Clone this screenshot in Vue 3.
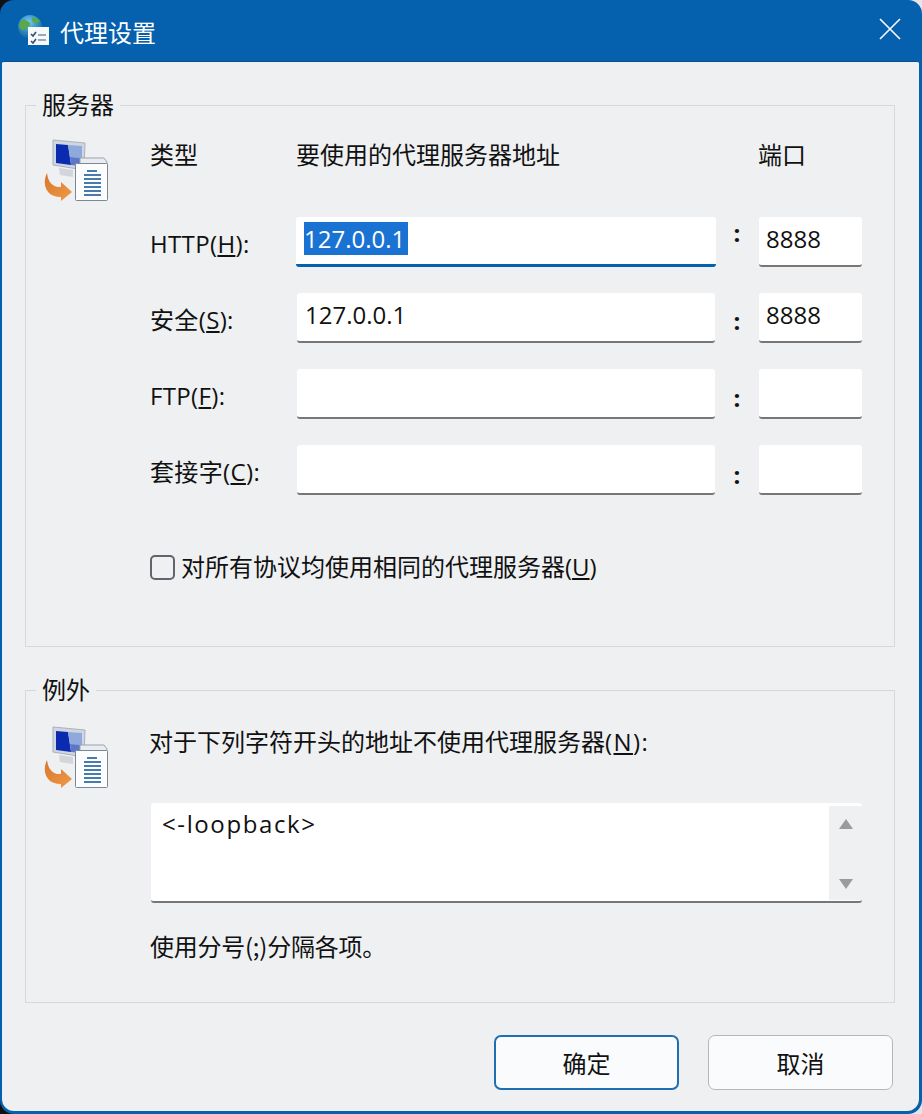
<script setup>
const rows = [
  { pre: 'HTTP(', key: 'H', post: '):', addr: '127.0.0.1', port: '8888', focus: true, colon: 'up' },
  { pre: '安全(', key: 'S', post: '):', addr: '127.0.0.1', port: '8888', focus: false, colon: 'mid' },
  { pre: 'FTP(', key: 'F', post: '):', addr: '', port: '', focus: false, colon: 'low' },
  { pre: '套接字(', key: 'C', post: '):', addr: '', port: '', focus: false, colon: 'low2' }
]
const lines = [174, 178, 182, 186, 190, 194]
</script>

<template>
  <div class="window">
    <header class="titlebar">
      <svg class="title-icon" width="34" height="34" viewBox="0 0 34 34">
        <defs>
          <radialGradient id="globe" cx="45%" cy="30%" r="70%">
            <stop offset="0" stop-color="#7cc8ef" />
            <stop offset="0.55" stop-color="#2f8fc9" />
            <stop offset="1" stop-color="#155f96" />
          </radialGradient>
          <linearGradient id="orange" x1="0" y1="0" x2="1" y2="1">
            <stop offset="0" stop-color="#d9762a" />
            <stop offset="1" stop-color="#f09a4a" />
          </linearGradient>
        </defs>
        <circle cx="12" cy="12" r="12" fill="url(#globe)" />
        <path d="M3 6c4-3 6 0 8 1s1 4-1 5-3 4-6 3S0 9 3 6zM14 3c3-1 6 0 8 3l-4 3c-2-1-5-3-4-6z" fill="#5aa84a" />
        <rect x="10" y="12" width="21" height="18" fill="#f6f8fa" />
        <path d="M13 19l2 2 3-4M13 26l2 2 3-4" fill="none" stroke="#35506e" stroke-width="1.6" />
        <path d="M20 20h8M20 25h8" stroke="#7a8ea4" stroke-width="1.6" />
      </svg>
      <span class="title-text">代理设置</span>
      <svg class="close" width="22" height="22" viewBox="0 0 22 22">
        <path d="M1 1l20 20M21 1L1 21" stroke="#fff" stroke-width="1.6" fill="none" />
      </svg>
    </header>

    <main class="client">
      <section class="group group-server">
        <span class="legend">服务器</span>
        <div class="grid">
          <div class="icon-cell">
            <svg width="66" height="66" viewBox="44 138 66 66">
              <path d="M53 140l32 3-1 27-31-5z" fill="#cfd6e0" stroke="#aab2bd" />
              <path d="M56 144l12 1 3 20-15-2z" fill="#0a2bb0" />
              <path d="M68 145l14 1v12l-12-1z" fill="#8fa9dc" />
              <path d="M70 157l12 1v8l-11-1z" fill="#5b78c8" />
              <path d="M59 168l14 2v7l-13-2z" fill="#d2d6da" />
              <path d="M80 158h24l3 4v36H80z" fill="#e9edf2" stroke="#9aa3ad" />
              <rect x="75.500" y="163.500" width="32" height="37" rx="1" fill="#fbfcfe" stroke="#7d8791" />
              <rect x="87" y="170" width="10" height="2" fill="#4a79ad" />
              <rect v-for="y in lines" :key="y" x="84" :y="y" width="17" height="2" fill="#4a79ad" />
              <path d="M47 173C42 183 45 197 61 197L61 201L72 192L61 182L61 187C53 188 48 182 47 173z" fill="url(#orange)" />
            </svg>
          </div>
          <span class="head head-type">类型</span>
          <span class="head head-addr">要使用的代理服务器地址</span>
          <span></span>
          <span class="head head-port">端口</span>

          <template v-for="row in rows" :key="row.key">
            <span></span>
            <span class="label">{{ row.pre }}<u>{{ row.key }}</u>{{ row.post }}</span>
            <div class="field" :class="{ focus: row.focus }">
              <span :class="{ selected: row.focus }">{{ row.addr }}</span>
            </div>
            <span class="colon" :class="row.colon">:</span>
            <div class="field port"><span>{{ row.port }}</span></div>
          </template>
        </div>
        <label class="check">
          <span class="box"></span>
          <span>对所有协议均使用相同的代理服务器(<u>U</u>)</span>
        </label>
      </section>

      <section class="group group-except">
        <span class="legend">例外</span>
        <div class="except-head">
          <div class="icon-cell">
            <svg width="66" height="66" viewBox="44 138 66 66">
              <path d="M53 140l32 3-1 27-31-5z" fill="#cfd6e0" stroke="#aab2bd" />
              <path d="M56 144l12 1 3 20-15-2z" fill="#0a2bb0" />
              <path d="M68 145l14 1v12l-12-1z" fill="#8fa9dc" />
              <path d="M70 157l12 1v8l-11-1z" fill="#5b78c8" />
              <path d="M59 168l14 2v7l-13-2z" fill="#d2d6da" />
              <path d="M80 158h24l3 4v36H80z" fill="#e9edf2" stroke="#9aa3ad" />
              <rect x="75.500" y="163.500" width="32" height="37" rx="1" fill="#fbfcfe" stroke="#7d8791" />
              <rect x="87" y="170" width="10" height="2" fill="#4a79ad" />
              <rect v-for="y in lines" :key="y" x="84" :y="y" width="17" height="2" fill="#4a79ad" />
              <path d="M47 173C42 183 45 197 61 197L61 201L72 192L61 182L61 187C53 188 48 182 47 173z" fill="url(#orange)" />
            </svg>
          </div>
          <span class="except-text">对于下列字符开头的地址不使用代理服务器<span class="wide">(<u>N</u>):</span></span>
        </div>
        <div class="textarea">
          <span class="ta-text">&lt;-loopback&gt;</span>
          <div class="scrollbar">
            <svg width="16" height="12" viewBox="0 0 16 12"><path d="M8 1l7 10H1z" fill="#9b9b9b" /></svg>
            <svg width="16" height="12" viewBox="0 0 16 12"><path d="M1 1h14L8 11z" fill="#9b9b9b" /></svg>
          </div>
        </div>
        <p class="hint">使用分号(;)分隔各项。</p>
      </section>

      <footer class="actions">
        <button class="btn primary">确定</button>
        <button class="btn">取消</button>
      </footer>
    </main>
  </div>
</template>

<style>
html, body { margin: 0; background: linear-gradient(90deg, #111 50%, #e6e6e6 50%); }
</style>

<style scoped>
.window {
  width: 922px;
  height: 1114px;
  box-sizing: border-box;
  display: flex;
  flex-direction: column;
  background: #0560ae;
  border-radius: 14px;
  padding: 0 3px 3px 2px;
  overflow: hidden;
  font-family: "Open Sans", "Noto Sans CJK SC", sans-serif;
  font-size: 24px;
  color: #111;
}
.titlebar {
  height: 61px;
  flex: none;
  display: flex;
  align-items: center;
  color: #fff;
  padding-left: 16px;
  padding-right: 18px;
}
.title-icon { margin-top: 2px; }
.title-text {
  font-family: "Noto Sans CJK SC", sans-serif;
  font-size: 24px;
  margin-left: 8px;
  margin-top: 1px;
}
.close { margin-left: auto; margin-top: -3px; }
.client {
  flex: 1;
  background: #eef0f2;
  border-top: 1px solid #0a4f8c;
  border-radius: 2px 2px 12px 12px;
  padding: 43px 24px 0 23px;
  display: flex;
  flex-direction: column;
}
.group {
  position: relative;
  border: 1px solid #d6d8da;
  box-sizing: border-box;
}
.group-server { height: 542px; padding-top: 32px; }
.group-except { height: 313px; margin-top: 43px; padding-top: 34px; }
.legend {
  position: absolute;
  left: 10px;
  top: -19px;
  padding: 0 6px;
  background: #eef0f2;
  font-family: "Noto Sans CJK SC", sans-serif;
  font-size: 24px;
  line-height: 34px;
}
.grid {
  display: grid;
  grid-template-columns: 124px 147px 418px 44px 103px;
  grid-template-rows: 53px;
  grid-auto-rows: 50px;
  row-gap: 26px;
}
.icon-cell { height: 66px; padding-left: 18px; }
.head {
  font-family: "Noto Sans CJK SC", sans-serif;
  font-size: 24px;
  line-height: 34px;
  margin-top: -1px;
}
.head-addr { margin-left: -1px; }
.head-port { margin-left: -1px; }
.label {
  line-height: 34px;
  padding-top: 10px;
  letter-spacing: 0.35px;
}
.field {
  background: #fff;
  border-bottom: 2px solid #777;
  border-radius: 3px;
  box-sizing: border-box;
  padding: 5px 0 0 8px;
  line-height: 33px;
  height: 50px;
}
.field.port { padding-left: 7px; }
.field.focus {
  border-bottom: 3px solid #0560ae;
  margin-left: -1px;
  margin-right: -1px;
}
.selected { background: #1a73d2; color: #fff; display: inline-block; padding-right: 3px; }
.colon { text-align: center; font-weight: 700; line-height: 20px; }
.colon.up { padding-top: 6px; }
.colon.mid { padding-top: 18px; }
.colon.low { padding-top: 19px; }
.colon.low2 { padding-top: 20px; }
.check {
  display: flex;
  align-items: center;
  gap: 6px;
  margin: 59px 0 0 124px;
  font-family: "Open Sans", "Noto Sans CJK SC", sans-serif;
  font-size: 24px;
  line-height: 26px;
}
.box {
  width: 21px;
  height: 21px;
  border: 2px solid #63636b;
  border-radius: 5px;
}
.except-head { display: flex; }
.except-text {
  font-family: "Open Sans", "Noto Sans CJK SC", sans-serif;
  font-size: 24px;
  line-height: 34px;
  margin-left: 39px;
}
.wide { letter-spacing: 1.4px; }
.textarea {
  margin: 12px 0 0 125px;
  width: 711px;
  height: 100px;
  background: #fff;
  border-bottom: 2px solid #777;
  border-radius: 3px;
  box-sizing: border-box;
  display: flex;
  justify-content: space-between;
  padding: 3px 0 0 11px;
}
.ta-text { line-height: 36px; letter-spacing: 1.6px; }
.scrollbar {
  width: 33px;
  height: 94px;
  background: #eef0f2;
  display: flex;
  flex-direction: column;
  align-items: center;
  justify-content: space-between;
  padding: 12px 0 10px;
  box-sizing: border-box;
}
.hint {
  margin: 26px 0 0 124px;
  font-family: "Noto Sans CJK SC", sans-serif;
  font-size: 24px;
  line-height: 34px;
  letter-spacing: -0.25px;
}
.actions {
  display: flex;
  justify-content: flex-end;
  gap: 29px;
  margin-top: 32px;
  padding-right: 2px;
}
.btn {
  width: 185px;
  height: 55px;
  border: 1px solid #b5b7ba;
  border-radius: 7px;
  background: #fafbfd;
  font-family: "Noto Sans CJK SC", sans-serif;
  font-size: 24px;
  color: #111;
}
.btn.primary { border: 2px solid #1f6fb0; }
</style>
